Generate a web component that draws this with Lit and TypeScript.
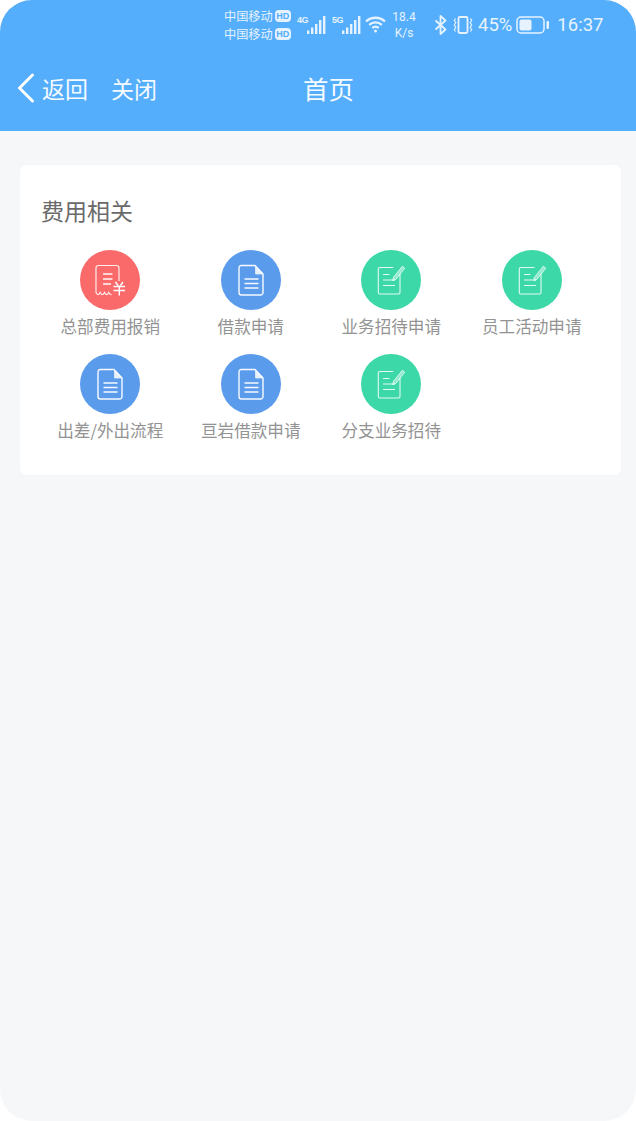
import { LitElement, html, css, svg } from "lit";
import { customElement } from "lit/decorators.js";

const docIcon = svg`<path d="M20 15.500h14L42 24v18.500a2.500 2.500 0 0 1-2.500 2.500h-19a2.500 2.500 0 0 1-2.500-2.500v-24.500a2.500 2.500 0 0 1 2-2.500z" fill="none" stroke="#fff" stroke-width="1.400" stroke-linejoin="round" opacity=".95"/><path d="M34.500 16.500V24H42z" fill="#fff" opacity=".85" stroke="#fff" stroke-width=".8" stroke-linejoin="round"/><path d="M23.500 29h14M23.500 33.500h14M23.500 38h14" stroke="#fff" stroke-width="1.700" fill="none" opacity=".95"/>`;
const noteIcon = svg`<path d="M32.500 17.500H18.800a1.500 1.500 0 0 0-1.500 1.500v23.500a1.500 1.500 0 0 0 1.500 1.500h18.700a1.500 1.500 0 0 0 1.500-1.500V24" fill="none" stroke="#fff" stroke-width="1.100" opacity=".85"/><path d="M22 24.500h6.500M22 30h12M22 35.500h12" stroke="#fff" stroke-width="1.100" fill="none" opacity=".85"/><path d="M32.300 27.500l9-11.300 2.500 2-9 11.300-3 1.200z" fill="#fff" fill-opacity=".45" stroke="#fff" stroke-width=".8" stroke-opacity=".85"/>`;
const receiptIcon = svg`<path d="M39 31V18a2.500 2.500 0 0 0-2.500-2.500H18.500A2.500 2.500 0 0 0 16 18v24.500c1.400 2.800 3 2.800 4.200 0 1.300 2.800 3 2.800 4.300 0 1.200 2.800 3 2.800 4.200 0 .8 1.500 1.800 2.200 2.800 2" fill="none" stroke="#fff" stroke-width="1.200" opacity=".88"/><path d="M23 24h9.500M23 29h9.500M23 34h8" stroke="#fff" stroke-width="1.300" fill="none" opacity=".95"/><path d="M35.500 32l2.500 3.500M43 32l-2.500 3.500M33.500 36.500h11.500M33.500 40.500h11.500M39.300 35.500V45.500" stroke="#fff" stroke-width="1.400" fill="none"/>`;

type Kind = "doc" | "note" | "receipt";
const items: { label: string; kind: Kind }[] = [
  { label: "总部费用报销", kind: "receipt" },
  { label: "借款申请", kind: "doc" },
  { label: "业务招待申请", kind: "note" },
  { label: "员工活动申请", kind: "note" },
  { label: "出差/外出流程", kind: "doc" },
  { label: "亘岩借款申请", kind: "doc" },
  { label: "分支业务招待", kind: "note" },
];
const glyphs = { doc: docIcon, note: noteIcon, receipt: receiptIcon };

@customElement("app-root")
export class AppRoot extends LitElement {
  static styles = css`
    :host {
      display: block;
      height: 1121px;
      overflow: hidden;
      background: #fff;
      font-family: "Noto Sans CJK SC", "Noto Sans", sans-serif;
    }
    .screen {
      height: 1121px;
      border-radius: 32px;
      overflow: hidden;
      background: #f6f7f9;
    }
    .header {
      height: 131px;
      background: #55aefc;
      color: #fff;
      box-sizing: border-box;
    }
    .status {
      height: 50px;
      display: flex;
      align-items: center;
      padding-left: 224px;
      color: #e6f3ff;
      box-sizing: border-box;
    }
    .carriers {
      display: flex;
      flex-direction: column;
      gap: 2px;
      width: 68px;
      margin-top: -1px;
    }
    .carrier {
      display: flex;
      align-items: center;
      height: 16px;
      font-size: 12.200px;
      line-height: 16px;
      white-space: nowrap;
    }
    .hd {
      margin-left: 2px;
      width: 16px;
      height: 12px;
      border-radius: 4px;
      background: #e6f3ff;
      color: #55aefc;
      font-family: "Liberation Sans", sans-serif;
      font-size: 9px;
      font-weight: 700;
      line-height: 12px;
      text-align: center;
    }
    .net {
      position: relative;
      display: block;
      width: 30px;
      height: 22px;
      flex: none;
    }
    .net-first {
      margin-left: 4px;
    }
    .net-second {
      margin-left: 5px;
    }
    .gen {
      position: absolute;
      left: 1px;
      top: 1px;
      font-family: "Liberation Sans", sans-serif;
      font-size: 9px;
      line-height: 10px;
      font-weight: 700;
      letter-spacing: -0.5px;
    }
    .net svg {
      position: absolute;
      right: 0;
      top: 2px;
    }
    .wifi {
      margin-left: 4px;
      margin-top: -2px;
      flex: none;
    }
    .speed {
      width: 26px;
      margin-left: 5px;
      font-family: "Roboto", sans-serif;
      font-size: 12px;
      line-height: 16px;
      text-align: center;
      white-space: nowrap;
    }
    .bt {
      margin-left: 17px;
      flex: none;
    }
    .vib {
      margin-left: 6px;
      flex: none;
    }
    .pct,
    .clock {
      font-family: "Roboto", sans-serif;
      font-size: 18.500px;
      line-height: 24px;
      white-space: nowrap;
    }
    .pct {
      margin-left: 5px;
    }
    .batt {
      margin-left: 4px;
      flex: none;
    }
    .clock {
      margin-left: 8px;
    }
    .nav {
      height: 81px;
      display: flex;
      align-items: center;
      padding: 0 0 2px 17px;
      box-sizing: border-box;
      margin-top: -2px;
    }
    .back {
      flex: none;
    }
    .link {
      font-size: 23px;
      line-height: 32px;
      white-space: nowrap;
      margin-left: 7px;
      color: #f4faff;
    }
    .link + .link {
      margin-left: 23px;
    }
    .title {
      font-size: 25.500px;
      line-height: 34px;
      margin-left: 146px;
      white-space: nowrap;
      color: #f4faff;
    }
    .card {
      margin: 34px 15px 0 20px;
      padding: 31px 19px 33px 20px;
      background: #fff;
      border-radius: 6px;
      box-shadow: 0 0 3px rgba(240, 246, 250, 0.9);
    }
    .card h2 {
      margin: 0 0 26px 1px;
      font-size: 23px;
      line-height: 28px;
      font-weight: 400;
      color: #6a6a6a;
    }
    .grid {
      display: grid;
      grid-template-columns: repeat(4, 1fr);
      row-gap: 16px;
    }
    .item {
      display: flex;
      flex-direction: column;
      align-items: center;
    }
    .circle {
      width: 60px;
      height: 60px;
      border-radius: 50%;
      display: block;
    }
    .doc {
      background: #5b9bec;
    }
    .note {
      background: #3dd8a8;
    }
    .receipt {
      background: #fb6a6a;
    }
    .label {
      margin-top: 5px;
      margin-bottom: 1px;
      font-size: 16.600px;
      line-height: 22px;
      color: #939393;
      white-space: nowrap;
    }
  `;

  private bars() {
    return html`<svg width="19" height="18" viewBox="0 0 19 18" fill="#e6f3ff">
      <rect x="0" y="14.500" width="2.400" height="3.500" />
      <rect x="4" y="11.500" width="2.400" height="6.500" />
      <rect x="8" y="8" width="2.400" height="10" />
      <rect x="12" y="4" width="2.400" height="14" />
      <rect x="16" y="0" width="2.400" height="18" />
    </svg>`;
  }

  render() {
    return html`<div class="screen">
      <header class="header">
        <div class="status">
          <div class="carriers">
            <div class="carrier">中国移动<span class="hd">HD</span></div>
            <div class="carrier">中国移动<span class="hd">HD</span></div>
          </div>
          <span class="net net-first"><span class="gen">4G</span>${this.bars()}</span>
          <span class="net net-second"><span class="gen">5G</span>${this.bars()}</span>
          <svg class="wifi" width="21" height="18" viewBox="0 0 21 18" fill="none" stroke="#e6f3ff" stroke-width="2.300">
            <path d="M1 6.500c5.300-5 13.700-5 19 0M4.200 9.800c3.500-3.200 9.100-3.200 12.600 0M7.300 13c1.800-1.500 4.600-1.500 6.400 0" />
            <circle cx="10.500" cy="16" r="1.500" fill="#e6f3ff" stroke="none" />
          </svg>
          <div class="speed">18.4<br />K/s</div>
          <svg class="bt" width="13" height="20" viewBox="0 0 13 20" fill="none" stroke="#e6f3ff" stroke-width="1.800">
            <path d="M1.500 5.500l10 9-5 4.500V1l5 4.500-10 9" stroke-linejoin="round" />
          </svg>
          <svg class="vib" width="20" height="20" viewBox="0 0 20 20" fill="none" stroke="#e6f3ff" stroke-width="1.500">
            <rect x="5.500" y="2" width="9" height="16" rx="1.500" stroke-width="1.800" />
            <path d="M2.500 3.500l-1.200 2 1.500 2-1.500 2.500 1.500 2.500-1.500 2 1.200 2M17.500 3.500l1.200 2-1.500 2 1.500 2.500-1.500 2.500 1.500 2-1.200 2" stroke-width="1.200" />
          </svg>
          <span class="pct">45%</span>
          <svg class="batt" width="33" height="18" viewBox="0 0 33 18" fill="none">
            <rect x="1" y="1" width="27" height="16" rx="4" stroke="#e6f3ff" stroke-width="1.500" />
            <rect x="3.500" y="3.500" width="12" height="11" rx="2" fill="#e6f3ff" />
            <rect x="30.500" y="5" width="2.500" height="8" rx="1" fill="#e6f3ff" />
          </svg>
          <span class="clock">16:37</span>
        </div>
        <nav class="nav">
          <svg class="back" width="18" height="30" viewBox="0 0 18 30" fill="none" stroke="#fff" stroke-width="3" stroke-linecap="round" stroke-linejoin="round">
            <path d="M15.500 2L2.500 15l13 13" />
          </svg>
          <span class="link">返回</span>
          <span class="link">关闭</span>
          <span class="title">首页</span>
        </nav>
      </header>
      <section class="card">
        <h2>费用相关</h2>
        <div class="grid">
          ${items.map(
            (it) => html`<div class="item">
              <svg class="circle ${it.kind}" viewBox="0 0 60 60">${glyphs[it.kind]}</svg>
              <span class="label">${it.label}</span>
            </div>`
          )}
        </div>
      </section>
    </div>`;
  }
}
